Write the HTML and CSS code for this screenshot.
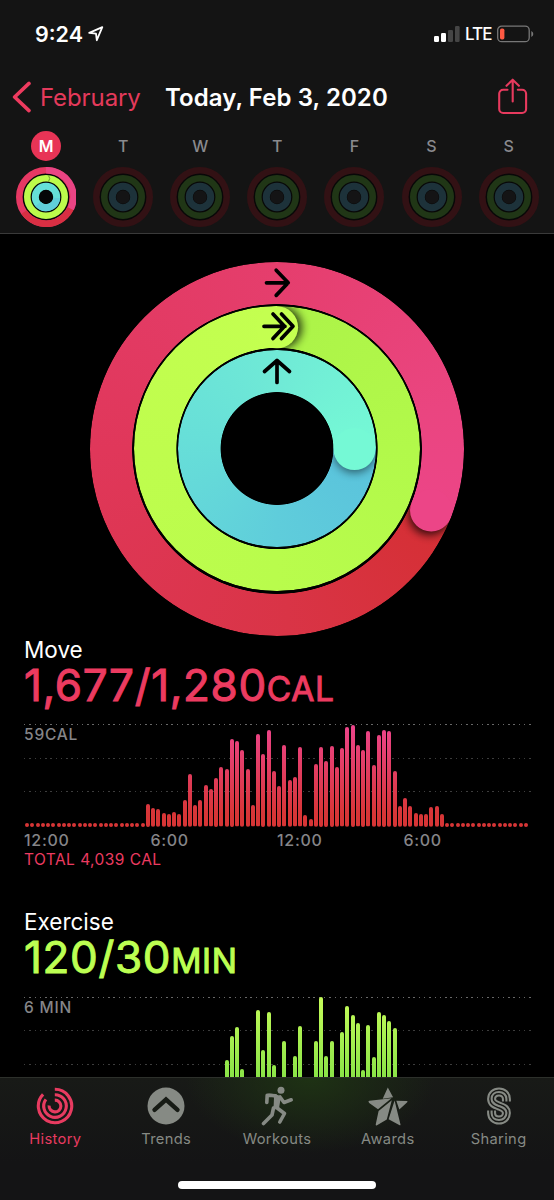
FILE: index.html
```html
<!DOCTYPE html>
<html lang="en">
<head>
<meta charset="utf-8">
<title>Activity</title>
<link rel="stylesheet" href="styles.css">
</head>
<body>
<div class="phone">
  <header class="header">
    <div class="status">
      <span class="clock">9:24</span>
      <svg class="location" width="16" height="16" viewBox="0 0 16 16"><path d="M1.2 6.8 14.3 1.2 8.8 14.2 8 7.6z"/></svg>
      <svg class="signal" width="26" height="16" viewBox="0 0 26 16"><rect x="0" y="10" width="5" height="6" rx="1.2"/><rect x="7" y="7" width="5" height="9" rx="1.2"/><rect class="off" x="14" y="4" width="5" height="12" rx="1.2"/><rect class="off" x="21" y="0" width="4.6" height="16" rx="1.2"/></svg>
      <span class="lte">LTE</span>
      <svg class="battery" width="38" height="18" viewBox="0 0 38 18"><rect class="case" x=".7" y="1.1" width="31.5" height="15.6" rx="4"/><path class="nub" d="M34.3 6v6q2-1 2-3t-2-3z"/><rect class="charge" x="3" y="3.6" width="4.4" height="10.8" rx="1.7"/></svg>
    </div>
    <nav class="nav">
      <svg class="back" width="20" height="32" viewBox="0 0 20 32"><path d="M17 2.400 2.600 16 17 29.600"/></svg>
      <span class="month">February</span>
      <h1 class="title">Today, Feb 3, 2020</h1>
      <svg class="share" width="30" height="38" viewBox="0 0 30 38"><path d="M9.5 11.7H5.2a4 4 0 0 0-4 4V31a4 4 0 0 0 4 4h18.9a4 4 0 0 0 4-4V15.700a4 4 0 0 0-4-4h-4.300M14.700 23.500V1.700M8.500 7.800 14.700 1.700 20.900 7.800"/></svg>
    </nav>
    <div class="week" id="week"></div>
  </header>

  <main class="content">
    <div class="rings">
      <div class="ring ring-move"></div>
      <div class="ring ring-exercise"></div>
      <div class="ring ring-stand"></div>
      <svg class="ring-tips" width="374" height="374" viewBox="-187 -187 374 374">
        <defs>
          <filter id="soft" x="-60%" y="-60%" width="220%" height="220%"><feGaussianBlur stdDeviation="4.5"/></filter>
          <clipPath id="c-move"><path clip-rule="evenodd" d="M-187 0A187 187 0 1 1 187 0A187 187 0 1 1-187 0M-144.800 0A144.800 144.800 0 1 1 144.800 0A144.800 144.800 0 1 1-144.800 0"/></clipPath>
          <clipPath id="c-ex"><path clip-rule="evenodd" d="M-142.800 0A142.800 142.800 0 1 1 142.800 0A142.800 142.800 0 1 1-142.800 0M-100.600 0A100.600 100.600 0 1 1 100.600 0A100.600 100.600 0 1 1-100.600 0"/></clipPath>
          <clipPath id="c-stand"><path clip-rule="evenodd" d="M-98.600 0A98.600 98.600 0 1 1 98.600 0A98.600 98.600 0 1 1-98.600 0M-56.400 0A56.400 56.400 0 1 1 56.400 0A56.400 56.400 0 1 1-56.400 0"/></clipPath>
          <clipPath id="ahead"><rect x="0" y="-190" width="80" height="190"/></clipPath>
        </defs>
        <g clip-path="url(#c-move)"><g transform="rotate(111.700)">
          <g clip-path="url(#ahead)"><circle class="shade" cx="4" cy="-165.900" r="21" filter="url(#soft)"/></g>
          <circle class="tip-move" cy="-165.900" r="21.100"/></g></g>
        <g clip-path="url(#c-ex)">
          <g clip-path="url(#ahead)"><circle class="shade" cx="4" cy="-121.700" r="21" filter="url(#soft)"/></g>
          <circle class="tip-ex" cy="-121.700" r="21.100"/></g>
        <g clip-path="url(#c-stand)"><g transform="rotate(90)">
          <g clip-path="url(#ahead)"><circle class="shade light" cx="3" cy="-77.500" r="21" filter="url(#soft)"/></g>
          <circle class="tip-stand" cy="-77.500" r="21.100"/></g></g>
        <g class="arrows">
          <path d="M-10.500-166.200H11M-.8-178.800 11.200-166.200-.8-153.600"/>
          <path d="M-13-122.700H8M-4-135 7.500-122.700-4-110.400M4.500-135 16-122.700 4.500-110.400"/>
          <path d="M0-66.500V-88M-12.500-77.500 0-88.500 12.500-77.500"/>
        </g>
      </svg>
    </div>

    <section class="metric move">
      <h2 class="name">Move</h2>
      <p class="value">1,677/1,280<span class="unit">CAL</span></p>
      <div class="chart" data-series="move"><i class="grid"></i><i class="grid"></i><i class="grid"></i><span class="peak">59CAL</span></div>
      <div class="hours"><span>12:00</span><span>6:00</span><span>12:00</span><span>6:00</span></div>
      <p class="total">TOTAL 4,039 CAL</p>
    </section>
    <section class="metric exercise">
      <h2 class="name">Exercise</h2>
      <p class="value">120/30<span class="unit">MIN</span></p>
      <div class="chart" data-series="exercise"><i class="grid"></i><i class="grid"></i><i class="grid"></i><span class="peak">6 MIN</span></div>
    </section>
  </main>

  <footer class="tabbar">
    <div class="tabs">
      <div class="tab active"><svg width="40" height="40" viewBox="-20 -20 40 40"><g class="line"><path d="M-.2-16.700A16.700 16.700 0 1 1-11.900-11.700"/><path d="M-.2-11.300A11.300 11.300 0 1 1-9.100-6.700"/><path d="M-.2-5.900A5.900 5.900 0 1 1-5.900-.5"/></g></svg><span>History</span></div>
      <div class="tab"><svg width="40" height="40" viewBox="-20 -20 40 40"><circle r="18.500"/><path class="chevron" d="M-11.500 3.800 0-6.500 11.500 3.800"/></svg><span>Trends</span></div>
      <div class="tab"><svg width="40" height="40" viewBox="-20 -20 40 40"><circle cx="4" cy="-15.800" r="3.500"/><path d="M-9-12.500Q-1-12.300 4-9.500L2 2-3.500 3.500-3-8.500z"/><g class="limb"><path d="M-10.200-3.500-9.800-10.800-1.500-10.300"/><path d="M3-9 7-3.500 14.200-6.200"/><path d="M1-8-1.800 1.500"/><path d="M-.5 1.500 7.500 7.500 2.800 16"/><path d="M-3.500 2-5 9-13.500 17.500"/></g></svg><span>Workouts</span></div>
      <div class="tab"><svg width="40" height="40" viewBox="-20 -20 40 40"><path d="M-.2-18.500 5.100-8.800-5.300-7.300zM-19.500-4.200Q-19.600-5-18.500-5.200L3.500-7.800-10 3.200-18.800-3zM3.800-5.800-9.400 4.900-12.300 18.500Q-12.200 19.800-11 19.200L-1.200 13.500zM6.600-5.500 12.500 18.400Q12.500 19.800 11.200 19L.6 13.200zM8.300-5.200 19-4.900Q20-4.600 19.200-3.800L11.300 3.600z"/></svg><span>Awards</span></div>
      <div class="tab"><svg width="40" height="40" viewBox="-20 -20 40 40"><g class="s-mark"><path class="s1" d="M7.400-4.500V-7C7.400-11.300 4.200-14 0-14S-7.400-11.300-7.400-7C-7.400-2.500-3.500-1.400 0 0S7.400 2.500 7.400 7C7.400 11.300 4.200 14 0 14S-7.400 11.300-7.400 7V4.500"/><path class="s2" d="M7.400-4V-7C7.400-11.300 4.200-14 0-14S-7.400-11.300-7.400-7C-7.400-2.500-3.500-1.400 0 0S7.400 2.500 7.400 7C7.400 11.300 4.200 14 0 14S-7.400 11.300-7.400 7V4"/><path class="s3" d="M7.400-4.500V-7C7.400-11.300 4.200-14 0-14S-7.400-11.300-7.400-7C-7.400-2.500-3.500-1.400 0 0S7.400 2.500 7.400 7C7.400 11.300 4.200 14 0 14S-7.400 11.300-7.400 7V4.500"/></g></svg><span>Sharing</span></div>
    </div>
    <div class="home"></div>
  </footer>
</div>
<script src="app.js"></script>
</body>
</html>
```
FILE: styles.css
```css
* { box-sizing: border-box; }
body { margin: 0; background: #000; }
h1, h2, p { margin: 0; font-weight: 400; }
svg { display: block; flex: none; }
.phone {
  width: 554px; height: 1200px; overflow: hidden;
  display: flex; flex-direction: column;
  background: #000; color: #fff;
  font-family: Inter, "Liberation Sans", sans-serif;
  white-space: nowrap;
}

.header { height: 234px; flex: none; background: #141414; border-bottom: 1px solid #3a3a3a; }
.status { height: 67px; padding: 1px 19px 0 35px; display: flex; align-items: center; }
.clock { width: 53px; font-size: 21.500px; font-weight: 600; letter-spacing: 0; }
.location { fill: none; stroke: #fff; stroke-width: 1.800; stroke-linejoin: round; }
.signal { margin-left: auto; fill: #fff; }
.signal .off { fill: #454545; }
.lte { width: 26px; margin: 0 6px 0 5px; font-size: 17px; font-weight: 500; letter-spacing: -.9px; }
.case { fill: none; stroke: #777; stroke-width: 1.300; }
.nub { fill: #777; }
.charge { fill: #ff5a43; }

.nav { height: 61px; padding: 0 26px 1px 12px; display: flex; align-items: center; }
.back { fill: none; stroke: #ee3b5f; stroke-width: 3.600; stroke-linecap: round; stroke-linejoin: round; }
.month { width: 125px; margin-left: 8px; color: #e43a5b; font-size: 24px; letter-spacing: -.1px; }
.title { font-size: 24px; font-weight: 600; letter-spacing: .08px; }
.share { margin-left: auto; fill: none; stroke: #e73a5e; stroke-width: 2.100; stroke-linecap: round; stroke-linejoin: round; }

.week { display: grid; grid-template-columns: repeat(7, 77.100px); padding-left: 7.500px; }
.day { display: flex; flex-direction: column; align-items: center; color: #8a8a8e; }
.letter { width: 30px; height: 30px; margin: 3px 0 5.500px; display: grid; place-items: center; font-size: 16px; font-weight: 500; border-radius: 50%; }
.day.today .letter { background: #e83456; color: #fff; font-weight: 600; }
.mini { fill: none; }
.mini .disc { fill: #080808; }
.mini .m { stroke: #321114; }
.mini .e { stroke: #203616; }
.mini .s { stroke: #1d323a; }
.mini .disc, .mini .hole { stroke: none; }
.mini .hole { fill: #141415; }
.today .mini .disc, .today .mini .hole { fill: #050708; }
.today .mini .m { stroke: #e63863; }
.today .mini .e { stroke: #bcfb4b; }
.today .mini .s { stroke: #65e0d8; }

.content { flex: 1; min-height: 0; overflow: hidden; }
.rings { width: 374px; height: 374px; margin: 27.500px auto 0; display: grid; place-items: center; }
.rings > * { grid-area: 1 / 1; }
.ring-tips { z-index: 1; }
.ring { border-radius: 50%; }
.ring-move {
  width: 374px; height: 374px;
  background: conic-gradient(from 111.700deg, #d52f34, #d93446 18%, #e0375a 44%, #e53e6d 69%, #ea4580 90%, #ec4587);
  mask: radial-gradient(circle, transparent 144.500px, #000 145.200px);
}
.ring-exercise {
  width: 285.600px; height: 285.600px;
  background: conic-gradient(#acf348, #b2f94a 25%, #b9fc4c 50%, #bffd4d 75%, #c4ff50);
  mask: radial-gradient(circle, transparent 100.300px, #000 101px);
}
.ring-stand {
  width: 197.200px; height: 197.200px;
  background: conic-gradient(from 90deg, #5ac2dc, #5fcddb 25%, #67dfd8 52%, #70ead6 76%, #75f9d5);
  mask: radial-gradient(circle, transparent 56px, #000 56.800px);
}
.shade { fill: #000; opacity: .75; }
.shade.light { opacity: .5; }
.tip-move { fill: #ec4587; }
.tip-ex { fill: #c4ff50; }
.tip-stand { fill: #75f9d5; }
.arrows { fill: none; stroke: #000; stroke-width: 3.700; stroke-linecap: round; stroke-linejoin: round; }

.metric { padding: 0 24px; height: 272.500px; }
.name { height: 28px; line-height: 27px; font-size: 22.500px; letter-spacing: 0; }
.value { height: 60.500px; line-height: 43px; font-size: 44px; font-weight: 400; letter-spacing: .65px; -webkit-text-stroke: 1px currentColor; stroke-linejoin: round; }
.unit { font-size: 33.500px; }
.move .value, .move .total { color: #ec3b60; }
.exercise .value { color: #bcff52; }
.chart { position: relative; height: 102.500px; padding-left: 1px; display: flex; align-items: flex-end; gap: 1.263px; }
.grid {
  position: absolute; left: 0; right: -1px; height: 1px;
  background: repeating-linear-gradient(90deg, #3d3d3d 0 1.500px, transparent 1.500px 5.263px);
}
.grid:nth-child(1) { top: 0; background: repeating-linear-gradient(90deg, #686868 0 1.500px, transparent 1.500px 5.263px); }
.grid:nth-child(2) { top: 33.500px; }
.grid:nth-child(3) { top: 67px; }
.peak { position: absolute; left: 0; top: 1px; color: #858588; font-size: 15.500px; line-height: 20px; font-weight: 500; letter-spacing: .8px; }
.bar { position: relative; flex: none; width: 4px; min-height: 4px; border-radius: 2px; background: linear-gradient(#ed458c, #d73536 88%) bottom / 100% 102px; }
.exercise .bar { background-image: linear-gradient(#c6fc5a, #7add42); }
.bar.none { visibility: hidden; }
.hours { display: grid; grid-template-columns: 126.500px 126.500px 126.500px 1fr; height: 23px; line-height: 27px; color: #858588; font-size: 16px; font-weight: 500; letter-spacing: .7px; }
.total { line-height: 20px; font-size: 15.500px; letter-spacing: .45px; }

.tabbar {
  height: 123px; flex: none; border-top: 1px solid #2d302b;
  background: radial-gradient(ellipse 125px 75px at 310px 0, #1e3214, transparent), linear-gradient(#181a17, #141415 70%);
}
.tabs { display: grid; grid-template-columns: repeat(5, 1fr); padding-top: 7.500px; }
.tab { display: flex; flex-direction: column; align-items: center; color: #868a84; fill: #868a84; font-size: 14.700px; line-height: 20px; letter-spacing: .35px; }
.tab span { margin-top: 3px; }
.tab.active { color: #e83b60; }
.line { fill: none; stroke: #e83b60; stroke-width: 3.100; stroke-linecap: butt; }
.chevron { fill: none; stroke: #171b15; stroke-width: 4.400; stroke-linecap: round; }
.limb { fill: none; stroke: #868a84; stroke-width: 3.600; stroke-linecap: round; stroke-linejoin: round; }
.s-mark { fill: none; }
.s1 { stroke: #868a84; stroke-width: 9; }
.s2 { stroke: #171815; stroke-width: 4.900; }
.s3 { stroke: #868a84; stroke-width: 2.100; }
.home { width: 198px; height: 8px; margin: 32px auto 0; border-radius: 4px; background: #fff; }
```
FILE: app.js
```js
const CHART_SLOTS = 96;

const series = {
  move: {
    start: 23, idle: true,
    heights: [23, 18.7, 17.7, 13.7, 13, 14.7, 12.7, 26.7, 52.7, 21.3, 26.7, 41.3, 37.3, 49, 59.3, 57.7,
      88, 85.3, 76.7, 57.7, 21.3, 92.3, 73, 96.7, 55.7, 41, 81.3, 46.7, 49.3, 79.3, 11.7, 7.3, 62.7,
      80, 66, 81, 59.7, 78.3, 99.7, 102, 81.3, 77, 95.3, 61.7, 91.7, 97, 95.7, 56, 20.7, 28.7, 20.7,
      13.7, 12.3, 13, 19.7, 20.7, 13]
  },
  exercise: {
    start: 38, idle: false,
    heights: [39, 62.7, 71.7, 30.3, 0, 0, 88.7, 49.3, 87, 34.3, 0, 58, 0, 43.3, 73, 0, 0, 58, 102,
      43.3, 58, 0, 66.7, 93.3, 84, 76, 29, 74, 42.3, 87, 84, 78, 71]
  }
};

document.querySelectorAll('.chart').forEach(chart => {
  const { start, idle, heights } = series[chart.dataset.series];
  for (let i = 0; i < CHART_SLOTS; i++) {
    const h = heights[i - start] || 0;
    const bar = document.createElement('b');
    bar.className = h || idle ? 'bar' : 'bar none';
    bar.style.height = h + 'px';
    chart.append(bar);
  }
});

const week = document.getElementById('week');
['M', 'T', 'W', 'T', 'F', 'S', 'S'].forEach((letter, i) => {
  const day = document.createElement('div');
  day.className = i ? 'day' : 'day today';
  const tips = i ? '' :
    '<path d="M25.500 9.500A27 27 0 0 1-22 15" stroke="#d92f43" stroke-width="6.600"/>' +
    '<path d="M0-26.700A26.700 26.700 0 0 1 24.800 11.800" stroke="#ea4484" stroke-width="6.600"/>' +
    '<path d="M10.700 1A10.700 10.700 0 0 1-8 7" stroke="#60cfda" stroke-width="7"/>' +
    '<path d="M2.500-21.500Q5-18.500 2.500-15.500" stroke="#729d32" stroke-width="1"/>';
  day.innerHTML = `<span class="letter">${letter}</span>
    <svg class="mini" width="60" height="60" viewBox="-30 -30 60 60">
      <circle class="disc" r="29"/>
      <circle class="m" r="26.700" stroke-width="6.600"/>
      <circle class="e" r="18.700" stroke-width="6.600"/>
      <circle class="s" r="10.700" stroke-width="7"/>
      <circle class="hole" r="6.800"/>${tips}
    </svg>`;
  week.append(day);
});
```
